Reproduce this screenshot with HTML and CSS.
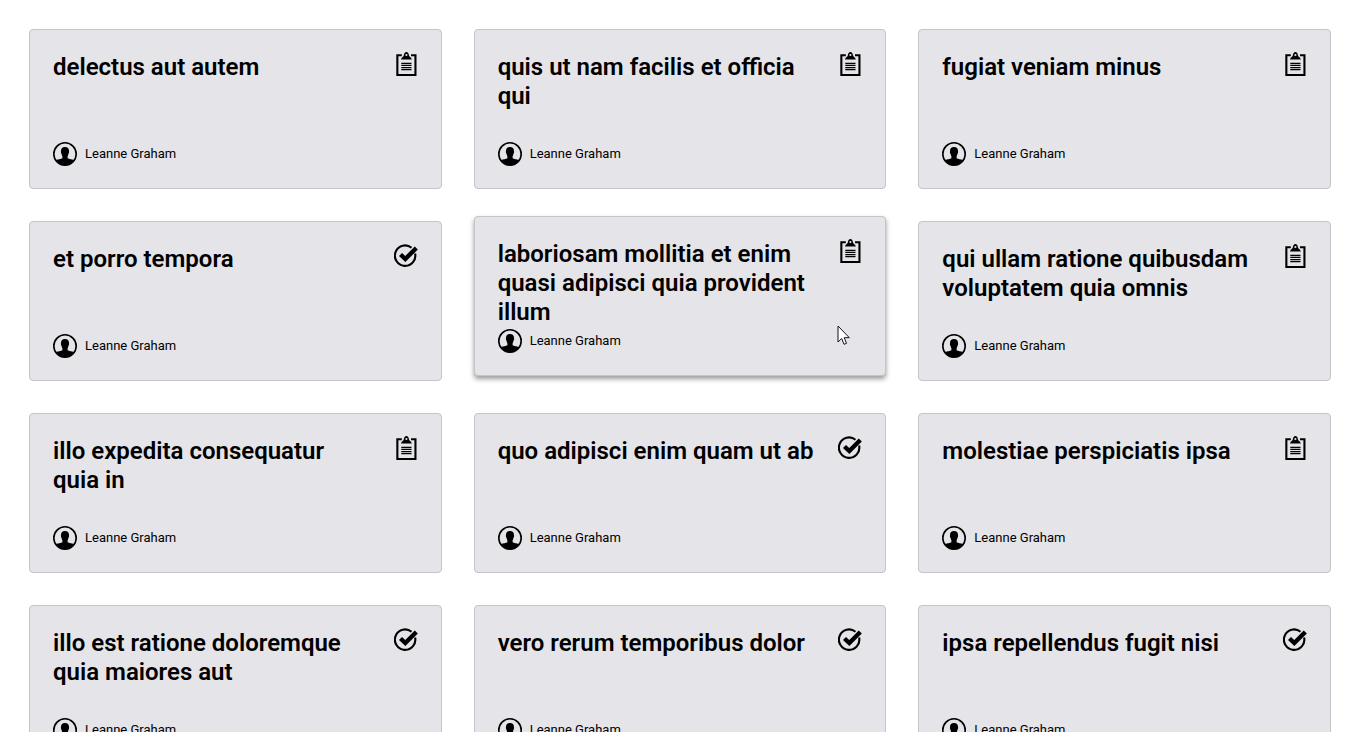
FILE: index.html
```html
<!DOCTYPE html>
<html lang="en">
<head>
<meta charset="utf-8">
<title>Todos</title>
<link rel="stylesheet" href="styles.css">
</head>
<body>
<svg class="sprite" aria-hidden="true">
  <symbol id="todo" viewBox="0 0 24 24"><path d="M2.300 2.300H7.800V4.300H4.400V22H20.400V4.300H17V2.300H22.500V24H2.300Z"/><path fill-rule="evenodd" d="M7 7.500C7.200 5.200 9.500 5.200 9.800 3.500C10 1.300 11 0 12.400 0S14.800 1.300 15 3.500C15.300 5.200 17.600 5.200 17.800 7.500ZM12.400 1.900A1.100 1.100 0 1 0 12.400 4.100A1.100 1.100 0 1 0 12.400 1.900Z"/><path d="M7.300 10.700H17.500V12H7.300ZM7.300 12.800H17.500V14.100H7.300ZM7.300 14.900H17.500V16.200H7.300ZM7.300 17H17.500V18.300H7.300Z"/></symbol>
  <symbol id="done" viewBox="0 0 24 24"><path d="M17.500 3.700A10.200 10.200 0 1 0 21.100 9.500" fill="none" stroke="#000" stroke-width="2.100"/><path d="M6.500 10.500L11.300 15L22.300 4" fill="none" stroke="#000" stroke-width="4.400"/></symbol>
  <symbol id="user" viewBox="0 0 24 24"><circle cx="12" cy="12" r="11.200" fill="none" stroke="#000" stroke-width="1.600"/><path d="M12 5C9.300 5 8 6.500 8 9C7.600 10 8.200 11.500 8.600 12C8.800 13 9 13.800 9.400 14.500V16.300C8 17.300 5 17 3 18.500Q7 23.500 12 23.500T21 18.500C19 17 16 17.300 14.600 16.300V14.500C15 13.800 15.200 13 15.400 12C15.800 11.500 16.400 10 16 9C16 6.500 14.700 5 12 5Z"/></symbol>
</svg>
<main class="grid" id="grid"></main>
<script src="app.js"></script>
</body>
</html>
```
FILE: styles.css
```css
* { box-sizing: border-box; }
body { margin: 0; font-family: Roboto, sans-serif; color: #000; overflow: hidden; height: 100vh; }
.sprite { display: none; }
.grid { display: grid; grid-template-columns: repeat(3, 1fr); gap: 32px; padding: 29px 28px 29px 29px; }
.card { position: relative; display: flex; flex-direction: column; justify-content: space-between; height: 160px; padding: 22px 23px; background: #e5e4e9; border: 1px solid #c4c4c9; border-radius: 4px; }
.card.raised { transform: translateY(-5px); box-shadow: 0 3px 5px rgba(0, 0, 0, 0.4); }
.top { display: flex; justify-content: space-between; align-items: flex-start; gap: 20px; }
.title { margin: 0; padding-top: 1px; font-size: 24px; line-height: 29px; font-weight: 600; }
.status { flex: none; width: 24px; height: 24px; }
.user { display: flex; align-items: center; gap: 8px; font-size: 13px; line-height: 24px; font-weight: 400; }
.avatar { width: 24px; height: 24px; }
.pointer { position: absolute; right: 35px; bottom: 29px; width: 13px; height: 21px; }
```
FILE: app.js
```js
const todos = [
  ["delectus aut autem", false],
  ["quis ut nam facilis et officia qui", false],
  ["fugiat veniam minus", false],
  ["et porro tempora", true],
  ["laboriosam mollitia et enim quasi adipisci quia provident illum", false, true],
  ["qui ullam ratione quibusdam voluptatem quia omnis", false],
  ["illo expedita consequatur quia in", false],
  ["quo adipisci enim quam ut ab", true],
  ["molestiae perspiciatis ipsa", false],
  ["illo est ratione doloremque quia maiores aut", true],
  ["vero rerum temporibus dolor", true],
  ["ipsa repellendus fugit nisi", true]
];
const pointer = `<svg class="pointer" viewBox="0 0 13 21"><path d="M1 1V17L4.700 13.500L7 19.300L9.500 18.300L7.200 12.700H12.300Z" fill="#fff" stroke="#112" stroke-width="1"/></svg>`;
document.getElementById("grid").innerHTML = todos.map(([title, done, raised]) => `
  <article class="card${raised ? " raised" : ""}">
    <div class="top"><h2 class="title">${title}</h2><svg class="status"><use href="#${done ? "done" : "todo"}"/></svg></div>
    <div class="user"><svg class="avatar"><use href="#user"/></svg><span>Leanne Graham</span></div>
    ${raised ? pointer : ""}
  </article>`).join("");
```
